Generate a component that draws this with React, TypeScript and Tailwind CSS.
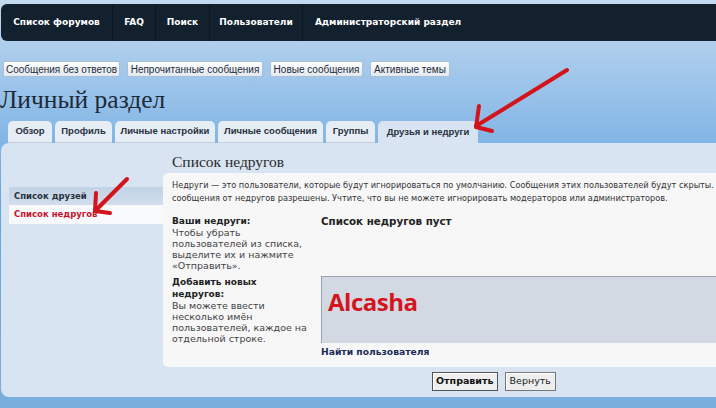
import React from "react";

const navItems = [
  { label: "Список форумов", w: "w-[112px]" },
  { label: "FAQ", w: "w-[43px]" },
  { label: "Поиск", w: "w-[54px]" },
  { label: "Пользователи", w: "w-[93px]" },
  { label: "Администраторский раздел", w: "w-[170px]" },
];

const quickLinks = [
  { label: "Сообщения без ответов", w: "w-[117px]" },
  { label: "Непрочитанные сообщения", w: "w-[136px]" },
  { label: "Новые сообщения", w: "w-[93px]" },
  { label: "Активные темы", w: "w-[80px]" },
];

const tabs = [
  { label: "Обзор", w: "w-[44px]" },
  { label: "Профиль", w: "w-[57px]" },
  { label: "Личные настройки", w: "w-[100px]" },
  { label: "Личные сообщения", w: "w-[105px]" },
  { label: "Группы", w: "w-[49px]" },
  { label: "Друзья и недруги", w: "w-[100px]" },
];

const serif = { fontFamily: '"Liberation Serif", Georgia, serif' };
const narrow = { fontFamily: '"Liberation Sans", Tahoma, sans-serif' };

function Arrows() {
  // red hand-drawn annotation arrows lying over the page
  return (
    <svg
      className="absolute inset-0 pointer-events-none"
      width="716"
      height="408"
      viewBox="0 0 716 408"
    >
      <g stroke="#d3141c" strokeWidth="4" strokeLinecap="round" fill="none">
        <path d="M567 70 L476 126" />
        <path d="M476 127 L479 106" />
        <path d="M476 127 L492 131" />
        <path d="M127 179 L96 210" />
        <path d="M95 211 L96 193" />
        <path d="M95 211 L110 213" />
      </g>
    </svg>
  );
}

export default function App() {
  return (
    <div
      className="relative w-[716px] h-[408px] overflow-hidden bg-gradient-to-b from-[#c3daf0] via-[#64a5e0] to-[#7aaedc] pt-[4px]"
      style={{ fontFamily: '"DejaVu Sans", Verdana, sans-serif' }}
    >
      {/* Top nav */}
      <div className="ml-[1px] h-[37px] bg-[#12212d] rounded-l-[6px] flex items-stretch">
        {navItems.map((n, i) => (
          <div
            key={n.label}
            className={`${n.w} flex items-center justify-center text-white font-bold text-[9px] ${
              i < navItems.length - 1 ? "border-r border-[#0a1720]" : ""
            }`}
          >
            {n.label}
          </div>
        ))}
      </div>

      {/* Quick links */}
      <div className="flex gap-[7px] ml-[3px] mt-[20px]" style={narrow}>
        {quickLinks.map((q) => (
          <div
            key={q.label}
            className={`${q.w} h-[16px] flex items-center justify-center rounded-[2px] border border-[#a9bfd3] bg-gradient-to-b from-white to-[#e3e9ef] text-[10px] text-[#1c2c3c]`}
          >
            {q.label}
          </div>
        ))}
      </div>

      {/* Page title */}
      <h1 className="mt-[6px] h-[34px] text-[25.5px] leading-[34px] text-[#1d2a38]" style={serif}>
        Личный раздел
      </h1>

      {/* Tabs */}
      <div className="flex gap-[3px] ml-[8px] mt-[4px] h-[22px]" style={narrow}>
        {tabs.map((t, i) => (
          <div
            key={t.label}
            className={`${t.w} flex items-center justify-center rounded-t-[5px] text-[9.5px] font-bold text-[#28323e] ${
              i === tabs.length - 1 ? "bg-[#d8e4f2]" : "bg-[#e6edf5] border-b border-[#c0d0e2]"
            }`}
          >
            {t.label}
          </div>
        ))}
      </div>

      {/* Panel */}
      <div className="ml-[1px] h-[254px] bg-[#d8e4f2] rounded-l-[8px] flex">
        {/* Left menu */}
        <div className="w-[162px] pl-[8px] pt-[44px] shrink-0">
          <div className="h-[18px] flex items-center pl-[5px] bg-gradient-to-b from-[#c2d2e6] to-[#d2deec] text-[8.5px] font-bold text-[#27313c]">
            Список друзей
          </div>
          <div className="h-[19px] flex items-center pl-[5px] bg-[#f8f9fb] text-[8.5px] font-bold text-[#c8132d]">
            Список недругов
          </div>
        </div>

        {/* Main column */}
        <div className="flex-1 pt-[8px]">
          <h2 className="pl-[9px] h-[22px] text-[15.5px] leading-[22px] text-[#2a2a2a]" style={serif}>
            Список недругов
          </h2>
          <div className="h-[194px] bg-[#f7f7f8] rounded-l-[5px] pl-[9px] pt-[6px] text-[#444]">
            <p className="text-[8.2px] leading-[13px] whitespace-nowrap text-[#333]">
              Недруги — это пользователи, которые будут игнорироваться по умолчанию. Сообщения этих пользователей будут скрыты.
              <br />
              сообщения от недругов разрешены. Учтите, что вы не можете игнорировать модераторов или администраторов.
            </p>

            <div className="flex mt-[10px]">
              <div className="w-[149px] shrink-0 pr-[9px]">
                <div className="font-bold text-[#222] text-[9px] leading-[12px]">Ваши недруги:</div>
                <div className="text-[9.5px] leading-[11px]">
                  Чтобы убрать пользователей из списка, выделите их и нажмите «Отправить».
                </div>
              </div>
              <div className="font-bold text-[#222] text-[10.3px] leading-[12px]">Список недругов пуст</div>
            </div>

            <div className="flex mt-[5px]">
              <div className="w-[149px] shrink-0 pr-[9px]">
                <div className="font-bold text-[#222] text-[9px] leading-[12px] pr-[20px]">
                  Добавить новых недругов:
                </div>
                <div className="text-[9.5px] leading-[11px]">
                  Вы можете ввести несколько имён пользователей, каждое на отдельной строке.
                </div>
              </div>
              <div className="flex-1">
                <div className="h-[67px] bg-[#d2d9e2] border-t border-l border-[#9aa3ad] pl-[6px] pt-[7px]">
                  <span
                    className="text-[24px] font-bold text-[#d4141e] tracking-[-0.5px]"
                    style={{ fontFamily: '"Open Sans", sans-serif' }}
                  >
                    Alcasha
                  </span>
                </div>
                <div className="mt-[3px] font-bold text-[9.2px] leading-[12px] text-[#1b2a55]">
                  Найти пользователя
                </div>
              </div>
            </div>
          </div>

          {/* Submit buttons */}
          <div className="flex gap-[7px] ml-[269px] mt-[5px]">
            <div className="h-[19px] px-[3px] flex items-center border border-[#555] bg-[#eeeeee] shadow-[inset_1px_1px_0_#fff] text-[9.5px] font-bold text-[#111]">
              Отправить
            </div>
            <div className="h-[19px] px-[4px] flex items-center border border-[#777] bg-[#eeeeee] shadow-[inset_1px_1px_0_#fff] text-[9.5px] text-[#222]">
              Вернуть
            </div>
          </div>
        </div>
      </div>

      <Arrows />
    </div>
  );
}
